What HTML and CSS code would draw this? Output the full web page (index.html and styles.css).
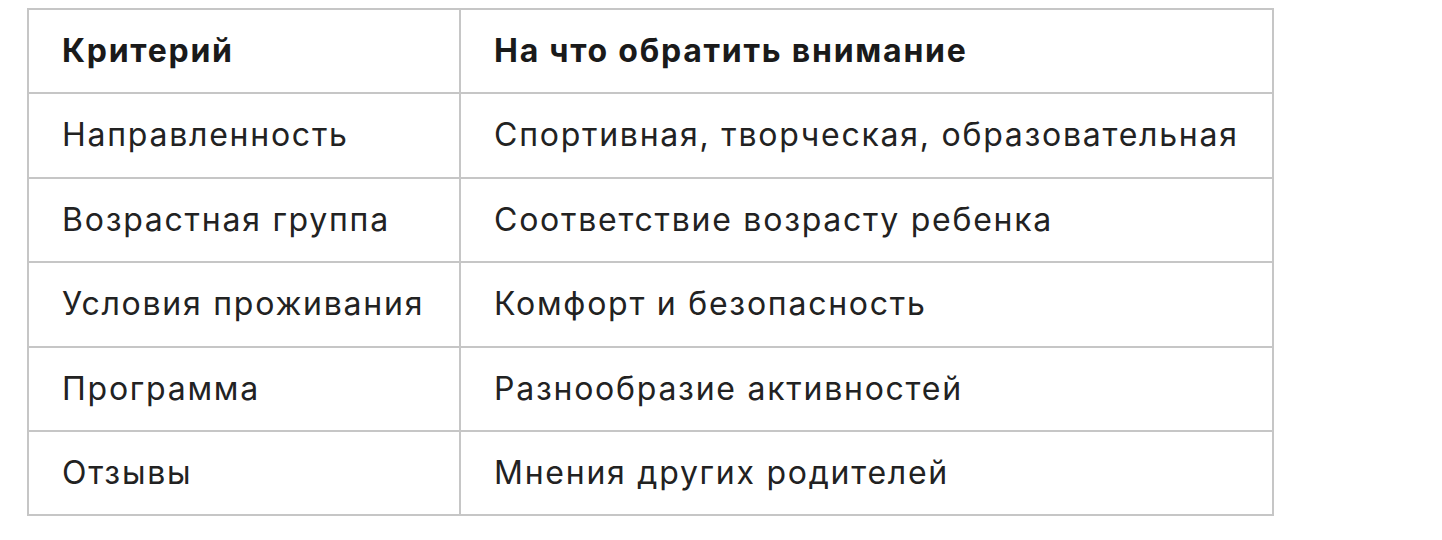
FILE: index.html
```html
<!DOCTYPE html>
<html lang="ru">
<head>
<meta charset="utf-8">
<link rel="stylesheet" href="styles.css">
</head>
<body>
<table class="criteria">
  <thead>
    <tr><th class="col-criterion">Критерий</th><th>На что обратить внимание</th></tr>
  </thead>
  <tbody>
    <tr><td>Направленность</td><td>Спортивная, творческая, образовательная</td></tr>
    <tr><td>Возрастная группа</td><td>Соответствие возрасту ребенка</td></tr>
    <tr><td>Условия проживания</td><td>Комфорт и безопасность</td></tr>
    <tr><td>Программа</td><td>Разнообразие активностей</td></tr>
    <tr><td>Отзывы</td><td>Мнения других родителей</td></tr>
  </tbody>
</table>
</body>
</html>
```
FILE: styles.css
```css
html, body {
  margin: 0;
  background: #ffffff;
}
body {
  padding: 8px 0 0 27px;
  font-family: Inter, "Noto Sans", sans-serif;
  color: #1f1f1f;
}
.criteria {
  border-collapse: collapse;
  font-size: 32px;
  line-height: 48.4px;
  letter-spacing: 1.75px;
}
.criteria th,
.criteria td {
  border: 2px solid #c6c6c6;
  padding: 17px 33px;
  text-align: left;
  white-space: nowrap;
}
.criteria .col-criterion {
  width: 364px;
}
.criteria th {
  font-weight: 700;
  color: #1a1a1a;
}
.criteria td {
  font-weight: 400;
  color: #222222;
}
```
